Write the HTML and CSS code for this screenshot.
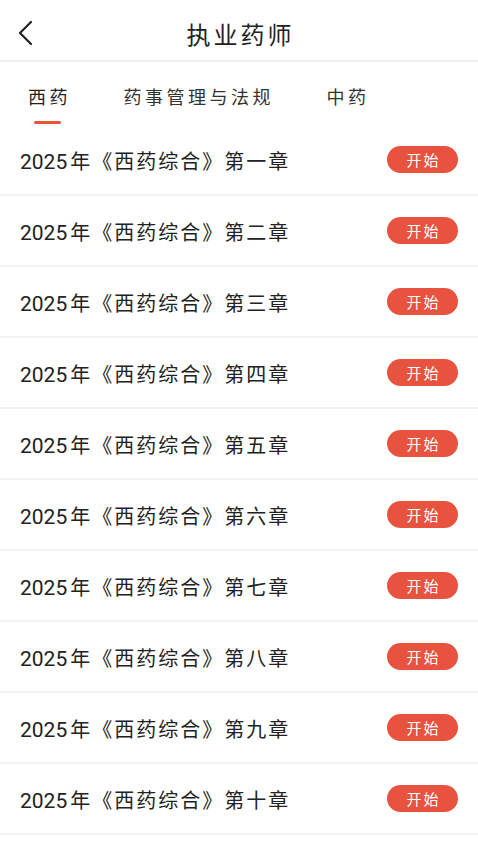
FILE: index.html
```html
<!DOCTYPE html>
<html lang="zh-CN">
<head>
<meta charset="utf-8">
<title>执业药师</title>
<link rel="stylesheet" href="styles.css">
</head>
<body>
<div class="app">
  <header class="topbar">
    <span class="back">
      <svg width="20" height="28" viewBox="0 0 20 28"><polyline points="13,3 2,14 13,25" fill="none" stroke="#222" stroke-width="2.2" stroke-linecap="round" stroke-linejoin="round"/></svg>
    </span>
    <h1 class="title">执业药师</h1>
  </header>
  <nav class="tabs">
    <div class="tab active"><span class="tab-label">西药</span><span class="tab-bar"></span></div>
    <div class="tab"><span class="tab-label">药事管理与法规</span><span class="tab-bar"></span></div>
    <div class="tab"><span class="tab-label">中药</span><span class="tab-bar"></span></div>
  </nav>
  <ul class="list">
    <li class="row"><span class="row-text"><span class="num">2025</span>年《西药综合》第一章</span><span class="btn">开始</span></li>
    <li class="row"><span class="row-text"><span class="num">2025</span>年《西药综合》第二章</span><span class="btn">开始</span></li>
    <li class="row"><span class="row-text"><span class="num">2025</span>年《西药综合》第三章</span><span class="btn">开始</span></li>
    <li class="row"><span class="row-text"><span class="num">2025</span>年《西药综合》第四章</span><span class="btn">开始</span></li>
    <li class="row"><span class="row-text"><span class="num">2025</span>年《西药综合》第五章</span><span class="btn">开始</span></li>
    <li class="row"><span class="row-text"><span class="num">2025</span>年《西药综合》第六章</span><span class="btn">开始</span></li>
    <li class="row"><span class="row-text"><span class="num">2025</span>年《西药综合》第七章</span><span class="btn">开始</span></li>
    <li class="row"><span class="row-text"><span class="num">2025</span>年《西药综合》第八章</span><span class="btn">开始</span></li>
    <li class="row"><span class="row-text"><span class="num">2025</span>年《西药综合》第九章</span><span class="btn">开始</span></li>
    <li class="row"><span class="row-text"><span class="num">2025</span>年《西药综合》第十章</span><span class="btn">开始</span></li>
  </ul>
</div>
</body>
</html>
```
FILE: styles.css
```css
html, body {
  margin: 0;
  padding: 0;
  background: #ffffff;
}
body {
  font-family: "Noto Sans CJK SC", "Noto Sans", sans-serif;
  color: #222;
}
.app {
  width: 478px;
}
.topbar {
  position: relative;
  height: 60px;
  display: flex;
  align-items: center;
  justify-content: center;
  border-bottom: 2px solid #efefef;
}
.back {
  position: absolute;
  left: 18px;
  top: 19px;
  display: flex;
}
.title {
  margin: 0;
  font-size: 24px;
  font-weight: 400;
  letter-spacing: 3px;
  padding-left: 3px;
  line-height: 30px;
  margin-top: 8px;
}
.tabs {
  display: flex;
  gap: 56px;
  padding: 22px 0 0 28px;
  height: 41px;
}
.tab {
  display: flex;
  flex-direction: column;
  align-items: center;
}
.tab-label {
  font-size: 18px;
  line-height: 24px;
  letter-spacing: 3.5px;
  margin-right: -3.5px;
  color: #333;
}
.tab.active .tab-label {
  color: #222;
}
.tab-bar {
  width: 27px;
  height: 3px;
  border-radius: 2px;
  margin-top: 13px;
}
.tab.active .tab-bar {
  background: #e6533f;
}
.list {
  list-style: none;
  margin: 0;
  padding: 0;
}
.row {
  height: 69px;
  border-bottom: 2px solid #f2f2f2;
  display: flex;
  align-items: center;
  justify-content: space-between;
  padding: 0 20px 0 20px;
}
.row-text {
  font-size: 20px;
  letter-spacing: 2px;
  color: #222;
  line-height: 28px;
  padding-top: 3px;
}
.num {
  font-family: Roboto, "Noto Sans", sans-serif;
  font-size: 21px;
  letter-spacing: 0;
  margin-right: 3px;
}
.btn {
  width: 71px;
  height: 27px;
  border-radius: 14px;
  background: #e8533f;
  color: #fff;
  font-size: 15px;
  letter-spacing: 2px;
  display: flex;
  align-items: center;
  justify-content: center;
  padding-left: 2px;
  box-sizing: border-box;
}
```
